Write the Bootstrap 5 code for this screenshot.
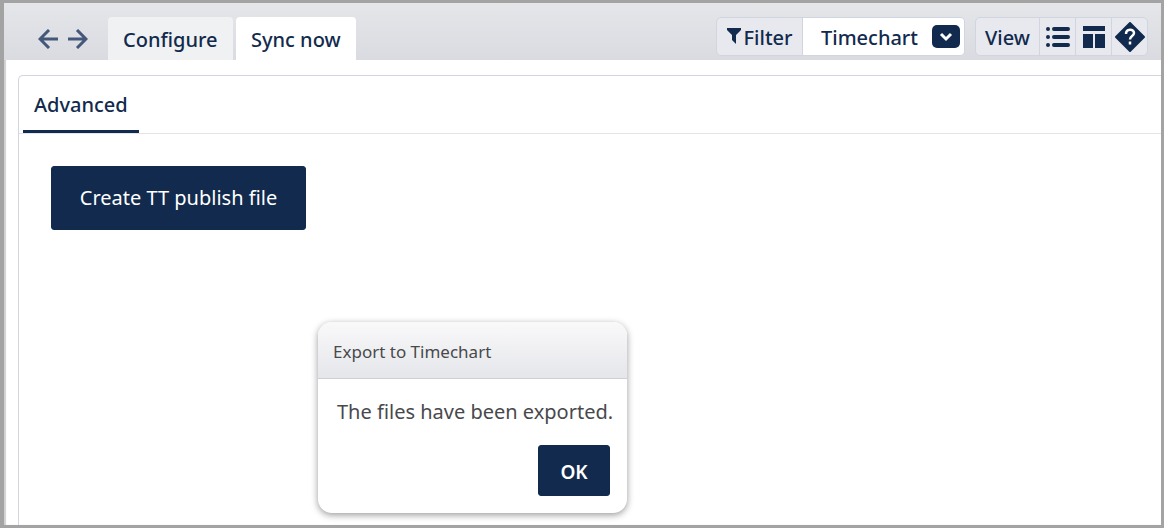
<!DOCTYPE html>
<html lang="en">
<head>
<meta charset="utf-8">
<meta name="viewport" content="width=device-width, initial-scale=1">
<title>Sync now</title>
<link href="https://cdn.jsdelivr.net/npm/bootstrap@5.3.0/dist/css/bootstrap.min.css" rel="stylesheet">
<style>
  :root { --navy: #112a4d; --line: #d0d5df; --frame: #a3a3a3; }
  body { font-family: "Segoe UI", "Noto Sans", "Open Sans", sans-serif; font-size: 20px; line-height: 28px; color: var(--navy); }
  .app-frame { border: 3px solid var(--frame); border-left-width: 4px; box-shadow: inset 2px 0 1px #d0d0d0; }
  .app-bar { height: 57px; padding: 0 13px 0 34px; background: linear-gradient(#e5e6ea, #dadbe0); }
  .app-bar, .app-bar button { font-weight: 500; }
  .arrows { gap: 10px; margin-right: 20px; }
  .arrow-btn { border: 0; background: none; padding: 0; width: 20px; height: 43px; color: #45587a; }
  .main-tab { height: 43px; padding: 2px 15px 0; color: var(--navy); background: #f0f1f3; border-radius: 4px 4px 0 0; }
  .main-tabs { gap: 3px; }
  .tab-configure { width: 125px; }
  .tab-sync { width: 120px; }
  .main-tab.active { background: #fff; }
  .toolbar-groups { gap: 10px; }
  .tool-group { height: 39px; border: 1px solid var(--line); border-radius: 5px; background: #e7e9ee; overflow: hidden; }
  .tool-group > * { border: 0; border-left: 1px solid var(--line); background: none; color: var(--navy); padding: 2px 0 0; }
  .tool-group > :first-child { border-left: 0; }
  .filter-btn { width: 85px; gap: 3px; }
  .tool-group > .filter-select { width: 162px; background: #fff; padding: 2px 4px 0 18px; }
  .chevron { width: 28px; height: 23px; margin-bottom: 2px; border-radius: 5px; background: var(--navy); }
  .view-label { width: 63px; }
  .tool-group > .icon-btn { width: 36px; padding: 0; }
  .pane { margin: 15px 0 0 14px; border: 1px solid var(--line); border-width: 1px 0 0 1px; border-top-left-radius: 5px; }
  .pane-tabs { border-bottom: 1px solid #e2e4e8; padding-left: 4px; }
  .pane-tab { width: 116px; height: 57px; padding: 4px 0 0 11px; font-weight: 500; color: var(--navy); border-bottom: 3px solid var(--navy); }
  .btn-navy { --bs-btn-color: #fff; --bs-btn-bg: var(--navy); --bs-btn-border-color: var(--navy); --bs-btn-hover-color: #fff; --bs-btn-hover-bg: #1c3c69; --bs-btn-border-radius: 3px; --bs-btn-font-size: 20px; --bs-btn-padding-x: 0; }
  .publish-btn { width: 255px; height: 64px; margin: 32px; }
  .export-dialog { left: 318px; top: 322px; width: 309px; border-radius: 14px; overflow: hidden; background: #fff; color: #48494c; box-shadow: 0 2px 7px rgba(0, 0, 0, .4); }
  .export-title { height: 57px; padding: 4px 15px 0; font-size: 17px; font-weight: 400; background: linear-gradient(#f9f9fa, #e5e6ea); border-bottom: 1px solid #cdd0d6; }
  .export-text { padding: 19px 0 19px 19px; }
  .ok-btn { --bs-btn-font-weight: 600; --bs-btn-font-size: 19px; width: 72px; height: 51px; padding-top: 9px; margin: 0 17px 17px; }
</style>
</head>
<body>
<div class="app-frame d-flex flex-column min-vh-100">
  <header class="app-bar d-flex align-items-end">
    <div class="arrows d-flex">
      <button class="arrow-btn d-flex align-items-center" type="button" aria-label="Back">
        <svg width="20" height="20" viewBox="0 0 20 20" fill="none" stroke="currentColor" stroke-width="3"><path d="M20 10H3M11 1 2 10l9 9"/></svg>
      </button>
      <button class="arrow-btn d-flex align-items-center" type="button" aria-label="Forward">
        <svg width="20" height="20" viewBox="0 0 20 20" fill="none" stroke="currentColor" stroke-width="3"><path d="M0 10h17M9 1l9 9-9 9"/></svg>
      </button>
    </div>
    <nav class="main-tabs d-flex me-auto" aria-label="Main">
      <a href="#" class="main-tab tab-configure d-flex align-items-center text-decoration-none">Configure</a>
      <a href="#" class="main-tab tab-sync active d-flex align-items-center text-decoration-none" aria-current="page">Sync now</a>
    </nav>
    <div class="toolbar-groups d-flex mb-1">
      <div class="tool-group d-flex">
        <button class="filter-btn d-flex align-items-center justify-content-center" type="button">
          <svg class="mb-1" width="14" height="16" viewBox="0 0 14 16" fill="currentColor"><path d="M0 0h14v2L9 7v9l-4-4V7L0 2z"/></svg>Filter</button>
        <button class="filter-select d-flex align-items-center justify-content-between" type="button" aria-haspopup="listbox">Timechart
          <span class="chevron d-flex align-items-center justify-content-center"><svg width="14" height="10" viewBox="0 0 14 10" fill="none" stroke="#fff" stroke-width="3"><path d="m2 2 5 5 5-5"/></svg></span>
        </button>
      </div>
      <div class="tool-group d-flex">
        <span class="view-label d-flex align-items-center justify-content-center">View</span>
        <button class="icon-btn d-flex align-items-center justify-content-center" type="button" aria-label="List view">
          <svg width="24" height="22" viewBox="0 0 24 22" fill="none" stroke="currentColor" stroke-width="4" stroke-linecap="round"><path d="M2 3h0M2 11h0M2 19h0M8 3h14M8 11h14M8 19h14"/></svg>
        </button>
        <button class="icon-btn d-flex align-items-center justify-content-center" type="button" aria-label="Layout view">
          <svg width="22" height="22" viewBox="0 0 22 22" fill="currentColor"><path d="M0 0h22v5H0zM0 8h10v14H0zM12 8h10v14H12z"/></svg>
        </button>
        <button class="icon-btn d-flex align-items-center justify-content-center" type="button" aria-label="Help">
          <svg width="30" height="30" viewBox="0 0 30 30"><path fill="currentColor" stroke="currentColor" stroke-width="2" stroke-linejoin="round" d="m15 1 14 14-14 14L1 15z"/><path fill="none" stroke="#fff" stroke-width="2.500" d="M11 12c0-5.500 8-5.500 8-1 0 3-4 3-4 6.500M15 19.500v3"/></svg>
        </button>
      </div>
    </div>
  </header>
  <main class="pane flex-grow-1">
    <nav class="pane-tabs d-flex" aria-label="Section">
      <a href="#" class="pane-tab d-flex align-items-center text-decoration-none">Advanced</a>
    </nav>
    <button type="button" class="btn btn-navy publish-btn">Create TT publish file</button>
  </main>
</div>
<section class="export-dialog position-absolute" role="dialog" aria-labelledby="export-title">
  <h1 id="export-title" class="export-title d-flex align-items-center m-0">Export to Timechart</h1>
  <p class="export-text m-0">The files have been exported.</p>
  <div class="d-flex justify-content-end"><button type="button" class="btn btn-navy ok-btn">OK</button></div>
</section>
<script src="https://cdn.jsdelivr.net/npm/bootstrap@5.3.0/dist/js/bootstrap.bundle.min.js"></script>
</body>
</html>
